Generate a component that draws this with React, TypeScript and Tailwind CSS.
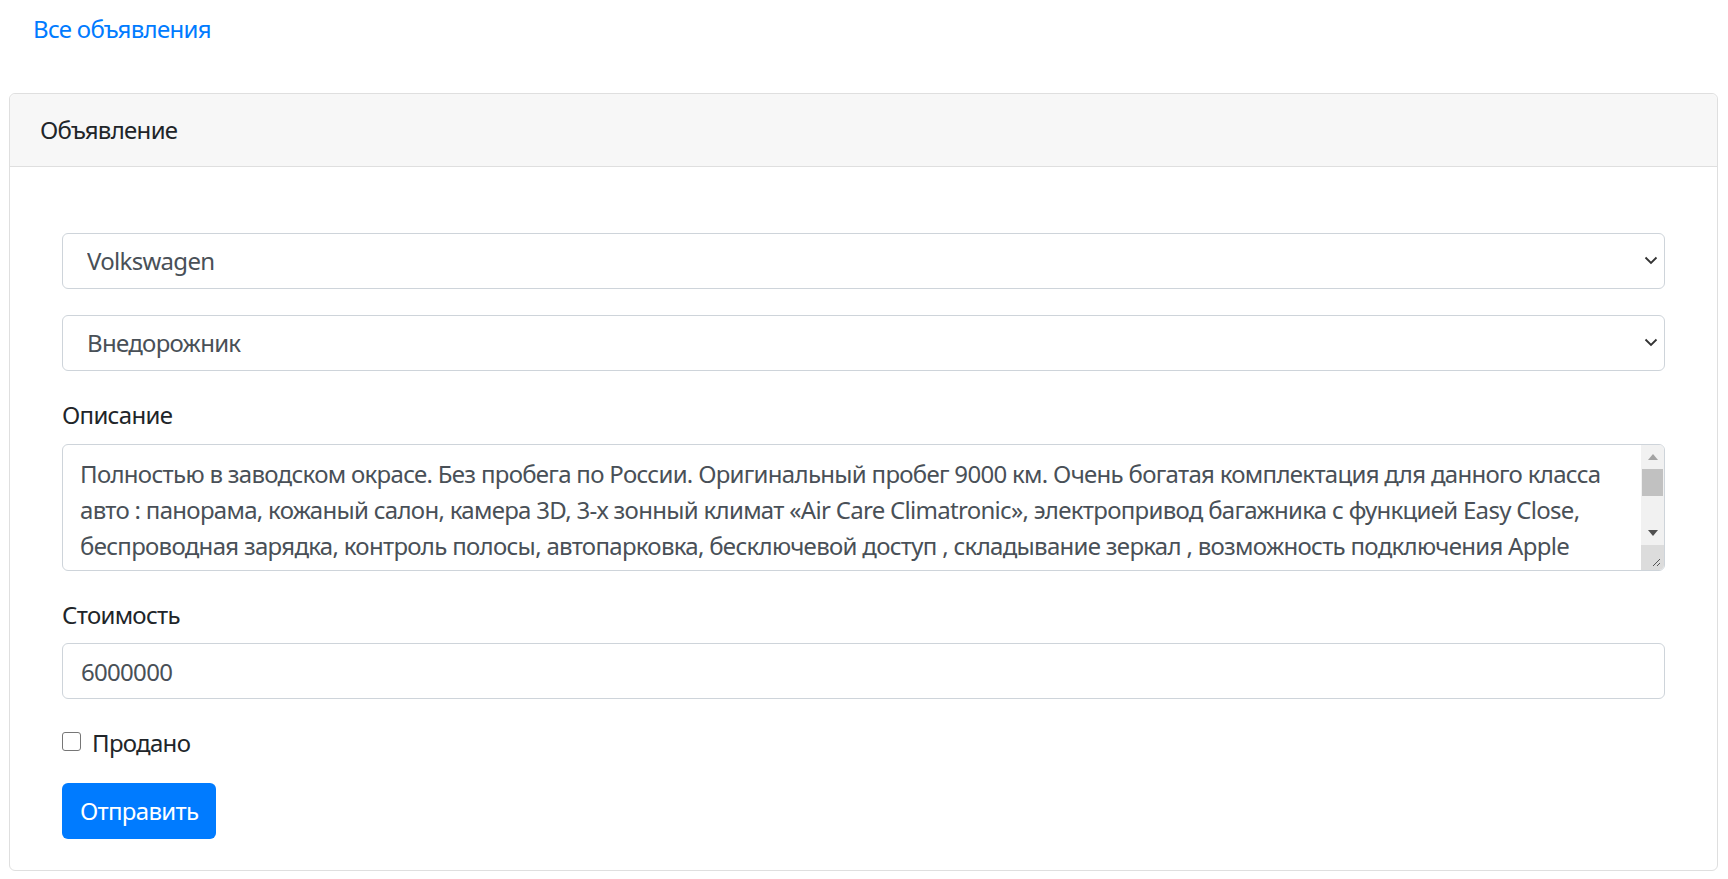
import { useState } from 'react'

const description =
  'Полностью в заводском окрасе. Без пробега по России. Оригинальный пробег 9000 км. Очень богатая комплектация для данного класса авто : панорама, кожаный салон, камера 3D, 3-х зонный климат «Air Care Climatronic», электропривод багажника с функцией Easy Close, беспроводная зарядка, контроль полосы, автопарковка, бесключевой доступ , складывание зеркал , возможность подключения Apple CarPlay и Android Auto, адаптивный круиз-контроль.'

function Chevron() {
  return (
    <svg width="14" height="9" viewBox="0 0 14 9" className="pointer-events-none">
      <path d="M1.5 1.5 L7 7 L12.5 1.5" fill="none" stroke="#333" strokeWidth="1.8" />
    </svg>
  )
}

function SelectField({ value, options }: { value: string; options: string[] }) {
  return (
    <div className="relative mb-[26px]">
      <select
        defaultValue={value}
        className="appearance-none block w-full h-[56px] bg-white border border-[#ced4da] rounded-[6px] pl-[24px] pr-10 text-[24px] text-[#495057] focus:outline-none"
      >
        {options.map((o) => (
          <option key={o}>{o}</option>
        ))}
      </select>
      <span className="absolute right-[7px] top-[23px]">
        <Chevron />
      </span>
    </div>
  )
}

export default function App() {
  const [sold, setSold] = useState(false)

  return (
    <div className="min-h-screen bg-white text-[#212529] font-['Noto_Sans','Open_Sans',sans-serif] text-[24px] leading-[36px] tracking-[-0.7px]">
      <div className="pt-[11px] pl-[33px] pb-[46px]">
        <a href="#" className="text-[#007bff] hover:underline">
          Все объявления
        </a>
      </div>

      <div className="mx-[9px] mr-[10px] border border-[#dfdfdf] rounded-[6px]">
        <div className="bg-[#f7f7f7] border-b border-[#dfdfdf] px-[30px] py-[18px] rounded-t-[6px]">
          Объявление
        </div>

        <form className="px-[52px] pt-[66px] pb-[31px]" onSubmit={(e) => e.preventDefault()}>
          <SelectField value="Volkswagen" options={['Volkswagen', 'BMW', 'Audi', 'Toyota']} />
          <SelectField value="Внедорожник" options={['Внедорожник', 'Седан', 'Хэтчбек']} />

          <div className="mb-[26px]">
            <label className="block mb-[11px]">Описание</label>
            <div className="flex h-[127px] border border-[#ced4da] rounded-[6px] overflow-hidden">
              <textarea
                readOnly
                value={description}
                className="flex-1 resize-none overflow-hidden px-[17px] py-[11px] text-[24px] leading-[36px] text-[#495057] focus:outline-none"
              />
              <div className="w-[23px] flex flex-col bg-[#f1f1f1]">
                <div className="h-[24px] flex items-center justify-center">
                  <svg width="10" height="6" viewBox="0 0 10 6">
                    <path d="M0 6 L5 0 L10 6 Z" fill="#a3a3a3" />
                  </svg>
                </div>
                <div className="mx-px h-[27px] bg-[#c1c1c1]" />
                <div className="flex-1" />
                <div className="h-[24px] flex items-center justify-center">
                  <svg width="10" height="6" viewBox="0 0 10 6">
                    <path d="M0 0 L10 0 L5 6 Z" fill="#505050" />
                  </svg>
                </div>
                <div className="h-[25px] bg-[#dcdcdc] flex items-end justify-end p-[3px]">
                  <svg width="10" height="10" viewBox="0 0 10 10">
                    <path d="M9 2 L2 9 M9 6 L6 9" stroke="#555" strokeWidth="1" />
                  </svg>
                </div>
              </div>
            </div>
          </div>

          <div className="mb-[26px]">
            <label className="block mb-[10px]">Стоимость</label>
            <input
              type="text"
              defaultValue="6000000"
              className="block w-full h-[56px] border border-[#ced4da] rounded-[6px] px-[18px] text-[24px] text-[#495057] focus:outline-none"
            />
          </div>

          <label className="flex items-center gap-[11px] mb-[22px] cursor-pointer">
            <input
              type="checkbox"
              checked={sold}
              onChange={(e) => setSold(e.target.checked)}
              className="appearance-none w-[19px] h-[19px] border-[1.5px] border-[#767676] rounded-[3px] bg-white checked:bg-[#007bff] -mt-[4px]"
            />
            <span>Продано</span>
          </label>

          <button
            type="submit"
            className="h-[56px] px-[18px] bg-[#007bff] hover:bg-[#0069d9] text-white rounded-[6px] text-[24px]"
          >
            Отправить
          </button>
        </form>
      </div>
    </div>
  )
}
